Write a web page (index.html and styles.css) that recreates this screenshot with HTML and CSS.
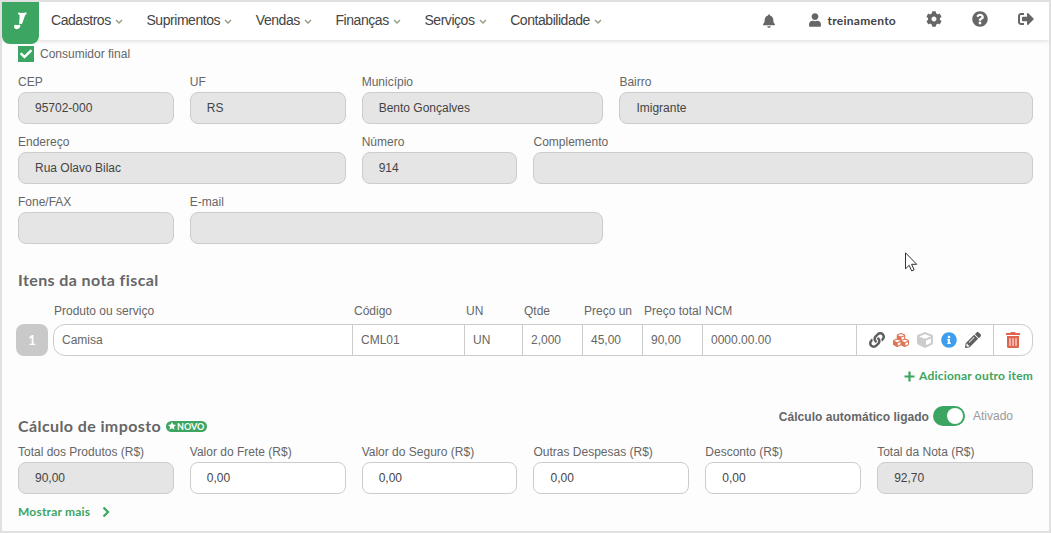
FILE: index.html
```html
<!DOCTYPE html>
<html lang="pt-BR">
<head>
  <meta charset="UTF-8" />
  <meta name="viewport" content="width=device-width, initial-scale=1.0"/>
  <title>Nota fiscal</title>
  <link rel="stylesheet" href="styles.css">
</head>
<body>
  <!-- Barra superior -->
  <header class="topbar">
    <a class="logo">
      <svg width="15" height="20" viewBox="0 0 15 20"><path d="M5 1.500l3.500.500 5.200-.600-.500 2.200-1 .3-3.200 9-2.900-.2.600-8.500-1.500-.9z"/><path d="M1 14.600l1.600-.9 1.600.6 2.800-.7.400 2-1.400 2-2.800.6-2-1.300z"/></svg>
    </a>
    <nav class="menu">
      <a>Cadastros <svg class="caret" viewBox="0 0 8 6"><path d="M1 1l3 3 3-3"/></svg></a>
      <a>Suprimentos <svg class="caret" viewBox="0 0 8 6"><path d="M1 1l3 3 3-3"/></svg></a>
      <a>Vendas <svg class="caret" viewBox="0 0 8 6"><path d="M1 1l3 3 3-3"/></svg></a>
      <a>Finanças <svg class="caret" viewBox="0 0 8 6"><path d="M1 1l3 3 3-3"/></svg></a>
      <a>Serviços <svg class="caret" viewBox="0 0 8 6"><path d="M1 1l3 3 3-3"/></svg></a>
      <a>Contabilidade <svg class="caret" viewBox="0 0 8 6"><path d="M1 1l3 3 3-3"/></svg></a>
    </nav>
    <div class="tools">
      <svg class="bell" width="12" height="14" viewBox="0 0 448 512"><path d="M224 512c35.320 0 63.970-28.650 63.970-64H160.030c0 35.350 28.650 64 63.970 64zm215.390-149.710c-19.320-20.760-55.470-51.990-55.470-154.290 0-77.700-54.480-139.900-127.940-155.160V32c0-17.670-14.320-32-31.980-32s-31.980 14.330-31.980 32v20.840C118.560 68.100 64.080 130.300 64.080 208c0 102.300-36.150 133.530-55.470 154.290-6 6.450-8.660 14.160-8.610 21.710.11 16.400 12.980 32 32.100 32h383.800c19.120 0 32-15.600 32.100-32 .05-7.550-2.610-15.270-8.610-21.710z"/></svg>
      <a class="user">
        <svg width="12" height="14" viewBox="0 0 448 512"><path d="M224 256c70.700 0 128-57.300 128-128S294.700 0 224 0 96 57.300 96 128s57.300 128 128 128zm89.600 32h-16.700c-22.200 10.200-46.900 16-72.900 16s-50.600-5.800-72.900-16h-16.700C60.200 288 0 348.200 0 422.400V464c0 26.500 21.500 48 48 48h352c26.500 0 48-21.500 48-48v-41.600c0-74.200-60.200-134.400-134.400-134.400z"/></svg>
        <span>treinamento</span>
      </a>
      <svg class="cog" width="16" height="16" viewBox="0 0 512 512"><path d="M487.400 315.700l-42.600-24.600c4.300-23.200 4.300-47 0-70.200l42.600-24.600c4.900-2.800 7.100-8.600 5.500-14-11.100-35.600-30-67.800-54.700-94.600-3.800-4.100-10-5.100-14.800-2.300L380.800 110c-17.900-15.400-38.500-27.300-60.800-35.100V25.800c0-5.600-3.900-10.500-9.400-11.700-36.700-8.200-74.300-7.800-109.200 0-5.500 1.200-9.400 6.100-9.400 11.700V75c-22.200 7.900-42.800 19.800-60.800 35.100L88.700 85.500c-4.900-2.800-11-1.900-14.800 2.300-24.700 26.700-43.600 58.900-54.700 94.600-1.700 5.400.6 11.200 5.500 14L67.300 221c-4.300 23.200-4.300 47 0 70.200l-42.600 24.600c-4.900 2.800-7.100 8.600-5.500 14 11.100 35.600 30 67.800 54.700 94.600 3.800 4.100 10 5.100 14.800 2.300l42.600-24.600c17.900 15.400 38.500 27.300 60.800 35.100v49.200c0 5.600 3.900 10.500 9.400 11.700 36.700 8.200 74.300 7.800 109.200 0 5.500-1.200 9.400-6.100 9.400-11.700v-49.200c22.200-7.900 42.800-19.800 60.800-35.100l42.600 24.600c4.900 2.800 11 1.900 14.800-2.300 24.700-26.700 43.600-58.900 54.700-94.600 1.500-5.500-.7-11.300-5.600-14.100zM256 336c-44.100 0-80-35.900-80-80s35.900-80 80-80 80 35.900 80 80-35.900 80-80 80z"/></svg>
      <svg class="help" width="16" height="16" viewBox="0 0 512 512"><path d="M504 256c0 136.997-111.043 248-248 248S8 392.997 8 256C8 119.083 119.043 8 256 8s248 111.083 248 248zM262.655 90c-54.497 0-89.255 22.957-116.549 63.758-3.536 5.286-2.353 12.415 2.715 16.258l34.699 26.310c5.205 3.947 12.621 3.008 16.665-2.122 17.864-22.658 30.113-35.797 57.303-35.797 20.429 0 45.698 13.148 45.698 32.958 0 14.976-12.363 22.667-32.534 33.976C247.128 238.528 216 254.941 216 296v4c0 6.627 5.373 12 12 12h56c6.627 0 12-5.373 12-12v-1.333c0-28.462 83.186-29.647 83.186-106.667 0-58.002-60.165-102-116.531-102zM256 338c-25.365 0-46 20.635-46 46 0 25.364 20.635 46 46 46s46-20.636 46-46c0-25.365-20.635-46-46-46z"/></svg>
      <svg class="exit" width="16" height="16" viewBox="0 0 512 512"><path d="M497 273L329 441c-15 15-41 4.500-41-17v-96H152c-13.300 0-24-10.700-24-24v-96c0-13.300 10.700-24 24-24h136V88c0-21.400 25.900-32 41-17l168 168c9.300 9.400 9.300 24.600 0 34zM192 436v-40c0-6.600-5.400-12-12-12H96c-17.700 0-32-14.300-32-32V160c0-17.700 14.300-32 32-32h84c6.600 0 12-5.400 12-12V76c0-6.600-5.400-12-12-12H96c-53 0-96 43-96 96v192c0 53 43 96 96 96h84c6.600 0 12-5.400 12-12z"/></svg>
    </div>
  </header>

  <main class="content">
    <label class="check">
      <span class="box"><svg width="12" height="12" viewBox="0 0 512 512"><path d="M173.898 439.404l-166.400-166.400c-9.997-9.997-9.997-26.206 0-36.204l36.203-36.204c9.997-9.998 26.207-9.998 36.204 0L192 312.690 432.095 72.596c9.997-9.997 26.207-9.997 36.204 0l36.203 36.204c9.997 9.997 9.997 26.206 0 36.204l-294.400 294.401c-9.998 9.997-26.207 9.997-36.204-.001z"/></svg></span>
      Consumidor final
    </label>

    <!-- Endereço do destinatário -->
    <div class="grid address">
      <div class="field s2"><label>CEP</label><div class="input off">95702-000</div></div>
      <div class="field s2"><label>UF</label><div class="input off">RS</div></div>
      <div class="field s3"><label>Município</label><div class="input off">Bento Gonçalves</div></div>
      <div class="field s5"><label>Bairro</label><div class="input off">Imigrante</div></div>
      <div class="field s4"><label>Endereço</label><div class="input off">Rua Olavo Bilac</div></div>
      <div class="field s2"><label>Número</label><div class="input off">914</div></div>
      <div class="field s6"><label>Complemento</label><div class="input off"></div></div>
      <div class="field s2"><label>Fone/FAX</label><div class="input off"></div></div>
      <div class="field s5"><label>E-mail</label><div class="input off"></div></div>
    </div>

    <!-- Itens -->
    <h2 class="title-items">Itens da nota fiscal</h2>
    <div class="item-cols item-head">
      <span>Produto ou serviço</span><span>Código</span><span>UN</span><span>Qtde</span><span>Preço un</span><span>Preço total</span><span>NCM</span>
    </div>
    <div class="item-line">
      <div class="item-number">1</div>
      <div class="item-cols item-row">
        <span>Camisa</span><span>CML01</span><span>UN</span><span>2,000</span><span>45,00</span><span>90,00</span><span>0000.00.00</span>
        <div class="actions">
          <svg class="dark" viewBox="0 0 512 512"><path d="M326.612 185.391c59.747 59.809 58.927 155.698.36 214.590-.11.120-.240.250-.360.370l-67.200 67.200c-59.270 59.270-155.699 59.262-214.960 0-59.270-59.260-59.270-155.700 0-214.960l37.106-37.106c9.840-9.840 26.786-3.300 27.294 10.606.648 17.722 3.826 35.527 9.690 52.721 1.986 5.822.567 12.262-3.783 16.612l-13.087 13.087c-28.026 28.026-28.905 73.660-1.155 101.960 28.024 28.579 74.086 28.749 102.325.510l67.200-67.190c28.191-28.191 28.073-73.757 0-101.830-3.701-3.694-7.429-6.564-10.341-8.569a16.037 16.037 0 0 1-6.947-12.606c-.396-10.567 3.348-21.456 11.698-29.806l21.054-21.055c5.521-5.521 14.182-6.199 20.584-1.731a152.482 152.482 0 0 1 20.522 17.197zM467.547 44.449c-59.261-59.262-155.690-59.270-214.960 0l-67.200 67.200c-.120.120-.250.250-.360.370-58.566 58.892-59.387 154.781.360 214.590a152.454 152.454 0 0 0 20.521 17.196c6.402 4.468 15.064 3.789 20.584-1.731l21.054-21.055c8.350-8.350 12.094-19.239 11.698-29.806a16.037 16.037 0 0 0-6.947-12.606c-2.912-2.005-6.640-4.875-10.341-8.569-28.073-28.073-28.191-73.639 0-101.830l67.200-67.190c28.239-28.239 74.300-28.069 102.325.510 27.750 28.300 26.872 73.934-1.155 101.960l-13.087 13.087c-4.350 4.350-5.769 10.790-3.783 16.612 5.864 17.194 9.042 34.999 9.690 52.721.509 13.906 17.454 20.446 27.294 10.606l37.106-37.106c59.271-59.259 59.271-155.699.001-214.959z"/></svg>
          <svg class="orange" viewBox="0 0 512 512"><path d="M488.600 250.200L392 214V105.500c0-15-9.300-28.400-23.400-33.700l-100-37.500c-8.100-3.100-17.100-3.100-25.300 0l-100 37.500c-14.100 5.300-23.400 18.700-23.400 33.700V214l-96.600 36.200C9.300 255.500 0 268.900 0 283.900V394c0 13.600 7.700 26.100 19.900 32.200l100 50c10.100 5.100 22.100 5.100 32.200 0l103.900-52 103.900 52c10.100 5.100 22.100 5.100 32.200 0l100-50c12.200-6.100 19.900-18.600 19.900-32.200V283.900c0-15-9.300-28.400-23.400-33.700zM358 214.800l-85 31.900v-68.200l85-37v73.300zM154 104.100l102-38.200 102 38.200v.6l-102 41.400-102-41.400v-.6zm84 291.100l-85 42.500v-79.100l85-38.800v75.400zm0-112l-102 41.400-102-41.400v-.6l102-38.200 102 38.200v.6zm240 112l-85 42.500v-79.100l85-38.800v75.400zm0-112l-102 41.400-102-41.400v-.6l102-38.200 102 38.200v.6z"/></svg>
          <svg class="light" viewBox="0 0 512 512"><path d="M239.100 6.300l-208 78c-18.700 7-31.100 25-31.100 45v225.100c0 18.200 10.300 34.800 26.500 42.900l208 104c13.500 6.800 29.400 6.800 42.900 0l208-104c16.300-8.100 26.500-24.800 26.500-42.900V129.300c0-20-12.400-37.900-31.100-44.900l-208-78C262 2.200 250 2.200 239.100 6.300zM256 68.400l192 72v1.100l-192 78-192-78v-1.100l192-72zm32 356V275.500l160-65v133.900l-160 80z"/></svg>
          <svg class="blue" viewBox="0 0 512 512"><path d="M256 8C119.043 8 8 119.083 8 256c0 136.997 111.043 248 248 248s248-111.003 248-248C504 119.083 392.957 8 256 8zm0 110c23.196 0 42 18.804 42 42s-18.804 42-42 42-42-18.804-42-42 18.804-42 42-42zm56 254c0 6.627-5.373 12-12 12h-88c-6.627 0-12-5.373-12-12v-24c0-6.627 5.373-12 12-12h12v-64h-12c-6.627 0-12-5.373-12-12v-24c0-6.627 5.373-12 12-12h64c6.627 0 12 5.373 12 12v100h12c6.627 0 12 5.373 12 12v24z"/></svg>
          <svg class="dark" viewBox="0 0 512 512"><path d="M497.900 142.100l-46.100 46.100c-4.700 4.700-12.300 4.700-17 0l-111-111c-4.700-4.700-4.700-12.300 0-17l46.100-46.100c18.700-18.700 49.100-18.700 67.900 0l60.100 60.100c18.800 18.700 18.800 49.100 0 67.900zM284.200 99.800L21.600 362.400.4 483.900c-2.900 16.400 11.400 30.600 27.800 27.800l121.500-21.300 262.600-262.600c4.700-4.700 4.700-12.300 0-17l-111-111c-4.800-4.700-12.400-4.700-17.100 0zM124.100 339.900c-5.500-5.500-5.500-14.300 0-19.800l154-154c5.500-5.500 14.300-5.500 19.800 0s5.500 14.300 0 19.800l-154 154c-5.500 5.500-14.300 5.500-19.800 0zM88 424h48v36.300l-64.500 11.300-31.100-31.100L51.700 376H88v48z"/></svg>
        </div>
        <div class="remove">
          <svg width="14" height="16" viewBox="0 0 448 512"><path d="M32 464a48 48 0 0 0 48 48h288a48 48 0 0 0 48-48V128H32zm272-256a16 16 0 0 1 32 0v224a16 16 0 0 1-32 0zm-96 0a16 16 0 0 1 32 0v224a16 16 0 0 1-32 0zm-96 0a16 16 0 0 1 32 0v224a16 16 0 0 1-32 0zM432 32H312l-9.400-18.700A24 24 0 0 0 281.100 0H166.800a23.720 23.720 0 0 0-21.400 13.300L136 32H16A16 16 0 0 0 0 48v32a16 16 0 0 0 16 16h416a16 16 0 0 0 16-16V48a16 16 0 0 0-16-16z"/></svg>
        </div>
      </div>
    </div>
    <a class="link add"><svg width="11" height="11" viewBox="0 0 11 11"><path d="M5.500 0.500v10M0.500 5.500h10"/></svg><span>Adicionar outro item</span></a>

    <!-- Impostos -->
    <div class="tax-head">
      <h2>Cálculo de imposto</h2>
      <span class="badge"><svg width="8" height="8" viewBox="0 0 24 24"><path d="M12 0l3.700 7.700 8.300 1.100-6.100 5.800 1.500 8.400L12 19l-7.400 4 1.500-8.400L0 8.800l8.300-1.100z"/></svg><span>NOVO</span></span>
      <div class="auto">
        <b>Cálculo automático ligado</b>
        <span class="toggle"></span>
        <span class="state">Ativado</span>
      </div>
    </div>
    <div class="grid taxes">
      <div class="field s2"><label>Total dos Produtos (R$)</label><div class="input off">90,00</div></div>
      <div class="field s2"><label>Valor do Frete (R$)</label><div class="input">0,00</div></div>
      <div class="field s2"><label>Valor do Seguro (R$)</label><div class="input">0,00</div></div>
      <div class="field s2"><label>Outras Despesas (R$)</label><div class="input">0,00</div></div>
      <div class="field s2"><label>Desconto (R$)</label><div class="input">0,00</div></div>
      <div class="field s2"><label>Total da Nota (R$)</label><div class="input off">92,70</div></div>
    </div>
    <a class="link more"><span>Mostrar mais</span><svg width="8" height="12" viewBox="0 0 8 12"><path d="M1.500 1.500L6 6l-4.500 4.500"/></svg></a>
  </main>

  <svg class="cursor" width="13" height="20" viewBox="0 0 13 20"><path d="M.5.8v16l3.700-3.500 2.500 5.600 2.400-1.100-2.500-5.500h5.100z"/></svg>
</body>
</html>
```
FILE: styles.css
```css
* {
  box-sizing: border-box;
}

body {
  margin: 0;
  height: 533px;
  border: 2px solid #e0e0e0;
  background: #fdfdfd;
  font-family: "Liberation Sans", Arial, sans-serif;
  font-size: 12px;
  color: #666;
  overflow: hidden;
}

svg {
  display: block;
  flex: none;
}

/* Barra superior */
.topbar {
  display: flex;
  align-items: flex-start;
  height: 38px;
  background: #fff;
  box-shadow: 0 1px 4px rgba(0, 0, 0, 0.14);
}

.logo {
  display: flex;
  justify-content: center;
  width: 37px;
  height: 42px;
  padding-top: 9px;
  border-radius: 0 0 8px 8px;
  background: #3ba561;
  fill: #fff;
}

.menu {
  display: flex;
  gap: 23.7px;
  margin-left: 12px;
  height: 36px;
}

.menu a {
  display: flex;
  align-items: center;
  font-size: 14px;
  letter-spacing: -0.45px;
  color: #444;
}

.caret {
  width: 8px;
  height: 6px;
  margin: 3px 0 0 4px;
  fill: none;
  stroke: #8f9a80;
  stroke-width: 1.3;
}

.tools {
  display: flex;
  align-items: center;
  height: 34px;
  margin-left: auto;
  padding-right: 15px;
  fill: #666;
}

.bell {
  margin: 3px 34px 0 0;
}

.user {
  display: flex;
  align-items: center;
  gap: 6px;
  margin: 2px 30px 0 0;
  font: bold 12px Lato, sans-serif;
  letter-spacing: 0.27px;
  color: #444;
}

.cog,
.help {
  margin-right: 30px;
}

/* Formulário */
.content {
  padding: 6px 16px 0;
}

.check {
  display: flex;
  align-items: center;
  gap: 6px;
  height: 16px;
}

.box {
  display: flex;
  align-items: center;
  justify-content: center;
  width: 16px;
  height: 16px;
  background: #3ba561;
  fill: #fff;
}

.grid {
  display: grid;
  grid-template-columns: repeat(12, 1fr);
  gap: 8px 16px;
}

.address {
  margin-top: 10px;
}

.s2 { grid-column: span 2; }
.s3 { grid-column: span 3; }
.s4 { grid-column: span 4; }
.s5 { grid-column: span 5; }
.s6 { grid-column: span 6; }

.field label {
  display: block;
  height: 20px;
  line-height: 20px;
  white-space: nowrap;
}

.input {
  height: 32px;
  padding-left: 16px;
  border: 1px solid #ccc;
  border-radius: 8px;
  background: #fff;
  line-height: 30px;
  color: #444;
}

.off {
  background: #e5e5e5;
}

h2 {
  margin: 0;
  font: bold 16px/20px Lato, sans-serif;
  letter-spacing: 0.4px;
  color: #666;
}

.title-items {
  margin-top: 26px;
}

/* Itens */
.item-cols {
  display: grid;
  grid-template-columns: 298px 112px 58px 60px 60px 60px 154px 137px 1fr;
}

.item-head {
  margin: 11px 0 3px 36px;
  line-height: 20px;
}

.item-head span {
  white-space: nowrap;
}

.item-head span:nth-child(n+2) {
  padding-left: 2px;
}

.item-head span:nth-child(7) {
  padding-left: 3px;
}

.item-line {
  display: flex;
  gap: 5px;
  margin-left: -2px;
}

.item-number {
  width: 32px;
  height: 32px;
  border-radius: 8px;
  background: #c9c9c9;
  font: bold 13px/33px Lato, sans-serif;
  text-align: center;
  color: #fff;
}

.item-row {
  flex: 1;
  height: 32px;
  border: 1px solid #ccc;
  border-radius: 12px;
  background: #fff;
  line-height: 30px;
}

.item-row > * {
  padding-left: 8px;
  border-left: 1px solid #ccc;
}

.item-row > :first-child {
  border-left: 0;
}

.item-row .actions {
  display: flex;
  align-items: center;
  gap: 8px;
  padding-left: 12px;
}

.actions svg {
  width: 16px;
  height: 16px;
}

.dark { fill: #606060; }
.orange { fill: #dc7455; }
.light { fill: #ccc; }
.blue { fill: #3e9eed; }

.item-row .remove {
  display: flex;
  align-items: center;
  padding-left: 12px;
  fill: #e0634d;
}

.link {
  display: flex;
  align-items: center;
  font: bold 12px/16px Lato, sans-serif;
  letter-spacing: 0.2px;
  color: #3ba561;
  stroke: #3ba561;
  stroke-width: 2.2;
  fill: none;
}

.link span {
  stroke: none;
}

.add {
  justify-content: flex-end;
  gap: 4px;
  margin-top: 12px;
}

/* Cálculo de imposto */
.tax-head {
  display: flex;
  align-items: center;
  height: 20px;
  margin-top: 32px;
}

.badge {
  display: flex;
  align-items: center;
  gap: 1px;
  height: 11px;
  margin-left: 5px;
  padding: 0 3px 0 2px;
  border-radius: 6px;
  background: #3ba561;
  font: bold 9px/11px Lato, sans-serif;
  color: #fff;
  fill: #fff;
}

.auto {
  display: flex;
  align-items: center;
  height: 20px;
  margin: -21px 20px 0 auto;
}

.auto b {
  margin-top: 3px;
  font-size: 12px;
  letter-spacing: 0.03px;
}

.toggle {
  width: 32px;
  height: 20px;
  margin: 0 8px 0 4px;
  padding: 2px 2px 2px 14px;
  border-radius: 10px;
  background: #3ba561;
}

.toggle::before {
  content: "";
  display: block;
  width: 16px;
  height: 16px;
  border-radius: 50%;
  background: #fff;
}

.state {
  margin-top: 1px;
  color: #999;
}

.taxes {
  margin-top: 6px;
}

.more {
  gap: 12px;
  margin-top: 10px;
}

/* Ponteiro sobre a página */
.cursor {
  position: absolute;
  left: 905px;
  top: 252px;
  fill: #fff;
  stroke: #333;
}
```
